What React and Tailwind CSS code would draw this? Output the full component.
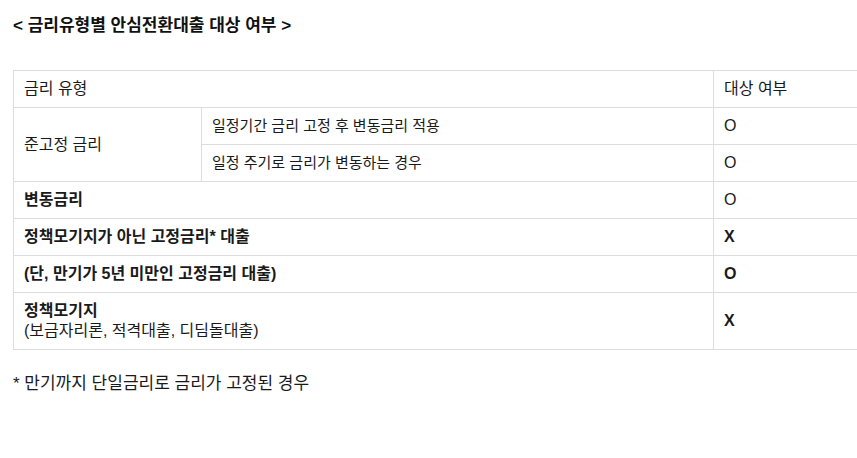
export default function App() {
  const cell = 'border border-[#dddddd] px-[10px] align-middle';
  const sub = `${cell} text-[15px]`;
  return (
    <div className="w-[857px] h-[458px] overflow-hidden bg-white text-[#1a1a1a] font-['Liberation_Sans','Noto_Sans_CJK_KR',sans-serif] text-[16px]">
      <div className="pl-[13px] pt-[15px]">
        <h2 className="text-[17px] font-bold leading-[22px] text-[#111]">&lt; 금리유형별 안심전환대출 대상 여부 &gt;</h2>
        <table className="mt-[33px] w-[900px] border-collapse">
          <tbody>
            <tr className="h-[37px]">
              <td colSpan={2} className={cell}>금리 유형</td>
              <td className={`${cell} w-[199px]`}>대상 여부</td>
            </tr>
            <tr className="h-[37px]">
              <td rowSpan={2} className={`${cell} w-[188px]`}>준고정 금리</td>
              <td className={sub}>일정기간 금리 고정 후 변동금리 적용</td>
              <td className={cell}>O</td>
            </tr>
            <tr className="h-[37px]">
              <td className={sub}>일정 주기로 금리가 변동하는 경우</td>
              <td className={cell}>O</td>
            </tr>
            <tr className="h-[37px]">
              <td colSpan={2} className={`${cell} font-bold`}>변동금리</td>
              <td className={cell}>O</td>
            </tr>
            <tr className="h-[37px]">
              <td colSpan={2} className={`${cell} font-bold`}>정책모기지가 아닌 고정금리* 대출</td>
              <td className={`${cell} font-bold`}>X</td>
            </tr>
            <tr className="h-[37px]">
              <td colSpan={2} className={`${cell} font-bold`}>(단, 만기가 5년 미만인 고정금리 대출)</td>
              <td className={`${cell} font-bold`}>O</td>
            </tr>
            <tr className="h-[57px]">
              <td colSpan={2} className={`${cell} leading-[20px]`}>
                <div className="font-bold">정책모기지</div>
                <div>(보금자리론, 적격대출, 디딤돌대출)</div>
              </td>
              <td className={`${cell} font-bold`}>X</td>
            </tr>
          </tbody>
        </table>
        <p className="mt-[23px] leading-[22px] text-[17px]">* 만기까지 단일금리로 금리가 고정된 경우</p>
      </div>
    </div>
  );
}
